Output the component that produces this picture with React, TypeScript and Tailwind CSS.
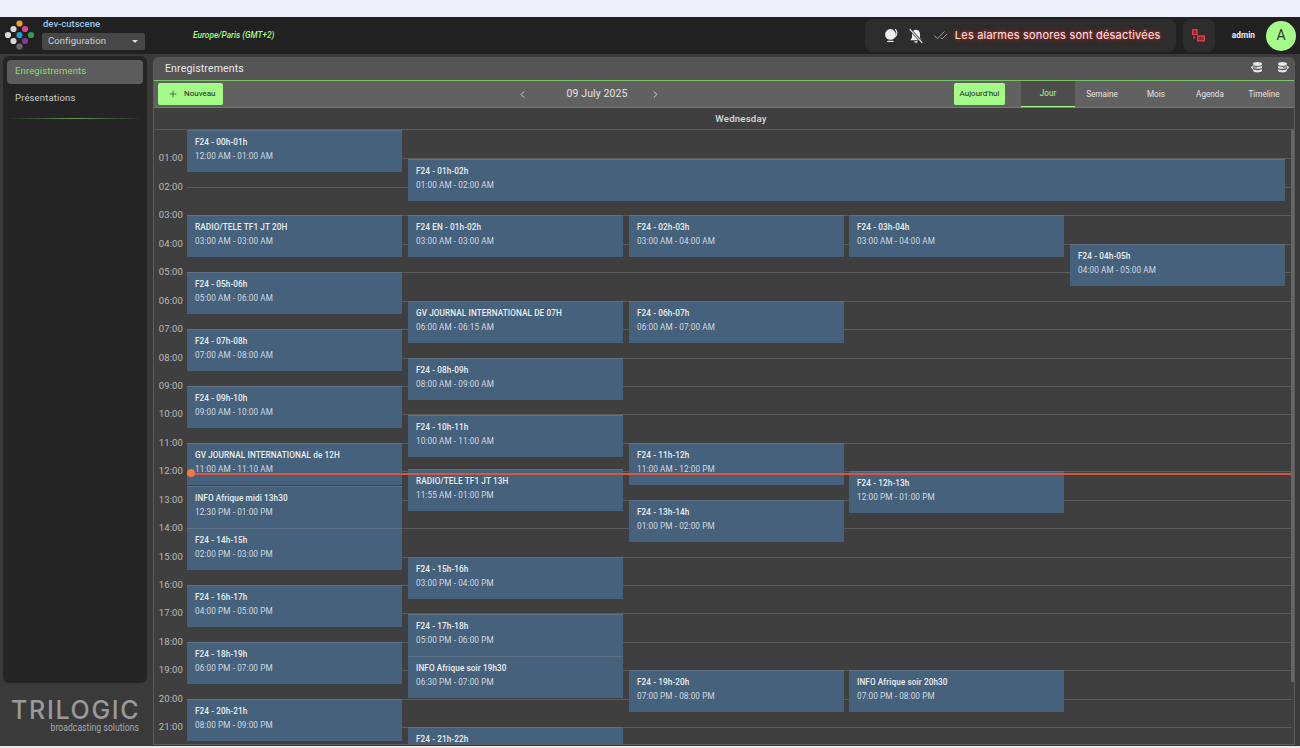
import React from "react";
import { CheckCheck, ChevronLeft, ChevronRight, Plus } from "lucide-react";

const COL_X = [33, 254, 475, 695, 916];
const COL_W = 215;

type Ev = { col: number; top: number; title: string; time?: string; w?: number };

// top is relative to the grid, which starts at y=130
const events: Ev[] = [
  { col: 0, top: 0, title: "F24 - 00h-01h", time: "12:00 AM - 01:00 AM" },
  { col: 0, top: 85, title: "RADIO/TELE TF1 JT 20H", time: "03:00 AM - 03:00 AM" },
  { col: 0, top: 142, title: "F24 - 05h-06h", time: "05:00 AM - 06:00 AM" },
  { col: 0, top: 199, title: "F24 - 07h-08h", time: "07:00 AM - 08:00 AM" },
  { col: 0, top: 256, title: "F24 - 09h-10h", time: "09:00 AM - 10:00 AM" },
  { col: 0, top: 313, title: "GV JOURNAL INTERNATIONAL de 12H", time: "11:00 AM - 11:10 AM" },
  { col: 0, top: 356, title: "INFO Afrique midi 13h30", time: "12:30 PM - 01:00 PM" },
  { col: 0, top: 398, title: "F24 - 14h-15h", time: "02:00 PM - 03:00 PM" },
  { col: 0, top: 455, title: "F24 - 16h-17h", time: "04:00 PM - 05:00 PM" },
  { col: 0, top: 512, title: "F24 - 18h-19h", time: "06:00 PM - 07:00 PM" },
  { col: 0, top: 569, title: "F24 - 20h-21h", time: "08:00 PM - 09:00 PM" },
  { col: 1, top: 29, title: "F24 - 01h-02h", time: "01:00 AM - 02:00 AM", w: 877 },
  { col: 1, top: 85, title: "F24 EN - 01h-02h", time: "03:00 AM - 03:00 AM" },
  { col: 1, top: 171, title: "GV JOURNAL INTERNATIONAL DE 07H", time: "06:00 AM - 06:15 AM" },
  { col: 1, top: 228, title: "F24 - 08h-09h", time: "08:00 AM - 09:00 AM" },
  { col: 1, top: 285, title: "F24 - 10h-11h", time: "10:00 AM - 11:00 AM" },
  { col: 1, top: 339, title: "RADIO/TELE TF1 JT 13H", time: "11:55 AM - 01:00 PM" },
  { col: 1, top: 427, title: "F24 - 15h-16h", time: "03:00 PM - 04:00 PM" },
  { col: 1, top: 484, title: "F24 - 17h-18h", time: "05:00 PM - 06:00 PM" },
  { col: 1, top: 526, title: "INFO Afrique soir 19h30", time: "06:30 PM - 07:00 PM" },
  // last one runs past the bottom of the panel, its time is not visible
  { col: 1, top: 597, title: "F24 - 21h-22h" },
  { col: 2, top: 85, title: "F24 - 02h-03h", time: "03:00 AM - 04:00 AM" },
  { col: 2, top: 171, title: "F24 - 06h-07h", time: "06:00 AM - 07:00 AM" },
  { col: 2, top: 313, title: "F24 - 11h-12h", time: "11:00 AM - 12:00 PM" },
  { col: 2, top: 370, title: "F24 - 13h-14h", time: "01:00 PM - 02:00 PM" },
  { col: 2, top: 540, title: "F24 - 19h-20h", time: "07:00 PM - 08:00 PM" },
  { col: 3, top: 85, title: "F24 - 03h-04h", time: "03:00 AM - 04:00 AM" },
  { col: 3, top: 341, title: "F24 - 12h-13h", time: "12:00 PM - 01:00 PM" },
  { col: 3, top: 540, title: "INFO Afrique soir 20h30", time: "07:00 PM - 08:00 PM" },
  { col: 4, top: 114, title: "F24 - 04h-05h", time: "04:00 AM - 05:00 AM" },
];

const hours = Array.from({ length: 22 }, (_, i) => i);
const tabs = ["Jour", "Semaine", "Mois", "Agenda", "Timeline"];

function Logo() {
  const dots = [
    [15.5, 3.5, "#f0a020"],
    [21, 9, "#e0409a"],
    [9.5, 9, "#d8d8d8"],
    [4, 15, "#d8d8d8"],
    [15.5, 15, "#1e9ad8"],
    [27, 15, "#2e9e4a"],
    [9.5, 21, "#d8d8d8"],
    [21, 21, "#7a3a98"],
    [15.5, 26.5, "#6a6a6a"],
  ] as const;
  return (
    <svg width="32" height="31" viewBox="0 0 32 31" className="shrink-0">
      {dots.map(([x, y, c], i) => (
        <circle key={i} cx={x} cy={y} r="3.1" fill={c} />
      ))}
    </svg>
  );
}

function DbIcon({ flip }: { flip?: boolean }) {
  return (
    <svg width="13" height="11" viewBox="0 0 13 11" fill="#e6e6e6">
      <g transform={flip ? "translate(-1 0)" : "translate(1 0)"}>
        <ellipse cx="6.500" cy="2" rx="4.500" ry="1.900" />
        <path d="M2 3.700c1 1.500 8 1.500 9 0v2c-1 1.500-8 1.500-9 0z" />
        <path d="M2 7c1 1.500 8 1.500 9 0v1.800c-1 2.200-8 2.200-9 0z" />
      </g>
      {flip ? (
        <path d="M6.500 4.900h3.700l-1.300-1.300.9-.8 2.700 2.600-2.700 2.600-.9-.8 1.300-1.300H6.500z" stroke="#555" strokeWidth=".6" />
      ) : (
        <path d="M6.500 4.900H2.800l1.300-1.300-.9-.8L.5 5.400 3.200 8l.9-.8-1.300-1.300h3.700z" stroke="#555" strokeWidth=".6" />
      )}
    </svg>
  );
}

export default function App() {
  return (
    <div className="w-[1300px] h-[748px] overflow-hidden flex flex-col bg-[#3a3a3a] font-['Roboto',sans-serif]">
      <div className="h-[17px] shrink-0 bg-[#eef1f9]" />

      {/* header */}
      <header className="h-[37px] shrink-0 bg-[#212121] flex items-center">
        <div className="pl-[4px] w-[42px] shrink-0">
          <Logo />
        </div>
        <div className="w-[103px] shrink-0 flex flex-col gap-[4px] -mt-[2px]">
          <span className="pl-px text-[9.5px] leading-[10px] font-medium text-[#9cc4ec]">dev-cutscene</span>
          <div className="h-[17px] rounded-[2px] bg-[#474747] flex items-center justify-between pl-[6px] pr-[7px] text-[9.5px] tracking-[0.05px] text-[#d0d0d0]">
            Configuration
            <span className="w-0 h-0 border-x-[3px] border-x-transparent border-t-[3px] border-t-[#ddd]" />
          </div>
        </div>
        <span className="ml-[48px] text-[8.4px] font-medium italic text-[#a5fb88]">Europe/Paris (GMT+2)</span>

        <div className="ml-auto h-[33px] w-[311px] rounded-lg bg-[#2d2d2d] flex items-center pl-[19px] text-[#eee]">
          <svg width="15" height="15" viewBox="0 0 14 14" className="shrink-0" fill="#eee">
            <circle cx="6" cy="6" r="5" />
            <path d="M10.500 1c2 2 2 5.500 0 7.500" fill="none" stroke="#eee" strokeWidth="1" />
            <path d="M3 13h6v-.8C7 11.800 5 11.800 3 12.200z" />
          </svg>
          <svg width="16" height="16" viewBox="0 0 14 14" className="ml-[9px] shrink-0" fill="#eee">
            <path d="M7 1.500c2.300 0 3.500 1.800 3.500 4v3l1.500 2.200H2l1.500-2.200v-3c0-2.200 1.200-4 3.500-4zM5.500 11.500h3A1.500 1.500 0 0 1 5.500 11.500z" />
            <path d="M1.500 1 12.500 13" stroke="#2d2d2d" strokeWidth="2.200" />
            <path d="M1.500 1 12.500 13" stroke="#eee" strokeWidth="1" />
          </svg>
          <CheckCheck size={15} strokeWidth={1} className="ml-[9px] shrink-0 text-[#ddd]" />
          <span className="ml-[7px] text-[11px] font-['Inter',sans-serif] tracking-[0.2px] whitespace-nowrap text-[#f4e8e8] [text-shadow:0_0_3px_#e03030,0_0_6px_#c02020]">
            Les alarmes sonores sont désactivées
          </span>
        </div>
        <div className="ml-[7px] h-[33px] w-[32px] rounded-lg bg-[#2d2d2d] flex items-center justify-center">
          <svg width="13" height="13" viewBox="0 0 13 13" fill="none" stroke="#e8404a" strokeWidth="1.300">
            <rect x="0.700" y="0.700" width="4.300" height="4.800" fill="#8a2c32" />
            <rect x="5.700" y="7" width="6.600" height="4.800" fill="#8a2c32" />
            <rect x="1" y="7.500" width="2.200" height="2.200" fill="#c8383f" stroke="none" />
          </svg>
        </div>
        <span className="ml-[17px] text-[8.300px] font-bold text-[#eee]">admin</span>
        <div className="ml-[11px] mr-[4px] w-[30px] h-[30px] rounded-full bg-[#a5fb88] flex items-center justify-center text-[14px] text-[#333]">
          A
        </div>
      </header>

      <div className="h-[692px] shrink-0 flex">
        {/* sidebar */}
        <aside className="w-[153px] shrink-0 flex flex-col pl-[3px] pr-[6px] pt-[2px]">
          <div className="h-[627px] shrink-0 rounded-md bg-[#242424] p-[4px]">
            <div className="h-[24px] rounded bg-[#5c5c5c] flex items-center pl-[8px] pb-px text-[9.5px] tracking-[0.14px] text-[#8fdc73]">
              Enregistrements
            </div>
            <div className="mt-[3px] h-[24px] flex items-center pl-[8px] pb-px text-[9.5px] tracking-[0.14px] text-[#cfcfcf]">
              Présentations
            </div>
            <div className="mt-[7px] h-px bg-gradient-to-r from-transparent via-[#5f9a50] to-transparent" />
          </div>
          <div className="mt-[14px] pl-[8px] flex flex-col items-start w-[136px]">
            <span className="text-[25px] leading-[26px] font-medium font-['Inter',sans-serif] text-[#9a9a9a] tracking-[1.7px]">TRILOGIC</span>
            <span className="self-end text-[10px] leading-[10px] tracking-[0.1px] text-[#a8a8a8] whitespace-nowrap origin-right scale-x-[.85]">
              broadcasting solutions
            </span>
          </div>
        </aside>

        {/* main panel */}
        <main className="w-[1142px] h-[688px] mt-[3px] flex flex-col rounded-t-md overflow-hidden border-x border-b border-[#5c5c5c]">
          <div className="h-[24px] shrink-0 bg-[#555] border-b border-b-[#7ac56a] flex items-center pl-[11px] pr-[4px] text-[10.5px] tracking-[0.15px] text-[#e8e8e8]">
            Enregistrements
            <div className="ml-auto flex gap-[14px] -mt-[2px]">
              <DbIcon />
              <DbIcon flip />
            </div>
          </div>

          <div className="h-[27px] shrink-0 bg-[#616161] border-b border-b-[#777] flex items-center pl-[4px]">
            <button className="h-[22px] w-[65px] rounded-[2px] bg-[#a5fb88] flex items-center pl-[10px] gap-[6px] text-[8px] text-[#223]">
              <Plus size={10} strokeWidth={1.5} />
              Nouveau
            </button>
            <ChevronLeft size={11} className="ml-[294px] text-[#e0e0e0]" />
            <span className="ml-[38px] w-[62px] text-center text-[10.5px] tracking-[0.1px] text-[#e4e4e4] whitespace-nowrap">09 July 2025</span>
            <ChevronRight size={11} className="ml-[22px] text-[#e0e0e0]" />
            <button className="ml-[293px] h-[22px] w-[51px] rounded-[2px] bg-[#a5fb88] text-[8px] text-[#223]">Aujourd'hui</button>
            <div className="ml-[16px] flex h-full">
              {tabs.map((t, i) => (
                <div
                  key={t}
                  className={
                    i === 0
                      ? "w-[54px] flex items-center justify-center text-[8.2px] text-[#a5fb88] bg-[#4d4d4d] border-b border-b-[#a5fb88]"
                      : "w-[54px] flex items-center justify-center text-[8.2px] text-[#e4e4e4]"
                  }
                >
                  {t}
                </div>
              ))}
            </div>
          </div>

          <div className="h-[22px] shrink-0 bg-[#3f3f3f] border-b border-b-[#5c5c5c] flex items-center justify-center pl-[34px] pt-px text-[9.6px] font-medium tracking-[0.2px] text-[#ddd]">
            Wednesday
          </div>

          {/* day grid */}
          <div className="relative flex-1 overflow-hidden bg-[#3f3f3f]">
            {hours.map((h) => (
              <div key={h} className="h-[28.45px] flex">
                <div className="w-[29px] shrink-0 text-right text-[9.5px] leading-[12px] -mt-[6px] text-[#bcbcbc] tracking-[0.1px]">
                  {h > 0 ? `${String(h).padStart(2, "0")}:00` : ""}
                </div>
                <div className={h > 0 ? "ml-[4px] flex-1 mr-[2px] h-px bg-[#5c5c5c]" : "ml-[4px] flex-1"} />
              </div>
            ))}

            {events.map((e) => (
              <div
                key={e.title + e.col}
                className="absolute h-[42px] bg-[#45617c] border-t border-t-[#5d7286] pl-[8px] pt-[7px] overflow-hidden"
                style={{ left: COL_X[e.col], top: e.top, width: e.w ?? COL_W }}
              >
                <div className="text-[8.2px] leading-[9px] font-medium tracking-[0.1px] text-[#eef0f2] whitespace-nowrap">{e.title}</div>
                {e.time && (
                  <div className="mt-[5px] text-[8.2px] leading-[9px] tracking-[0.1px] text-[#d4dae0] whitespace-nowrap">{e.time}</div>
                )}
              </div>
            ))}

            {/* current time */}
            <div className="absolute left-[33px] right-0 top-[343px] h-[2px] bg-[#d8563c]" />
            <div className="absolute left-[33px] top-[339px] w-[8px] h-[8px] rounded-full bg-[#f07a40]" />
            {/* scrollbar */}
            <div className="absolute right-0 top-0 w-[3px] h-[552px] bg-[#666]" />
          </div>
        </main>
      </div>

      <div className="h-[2px] shrink-0 bg-[#e8e8e8]" />
    </div>
  );
}
